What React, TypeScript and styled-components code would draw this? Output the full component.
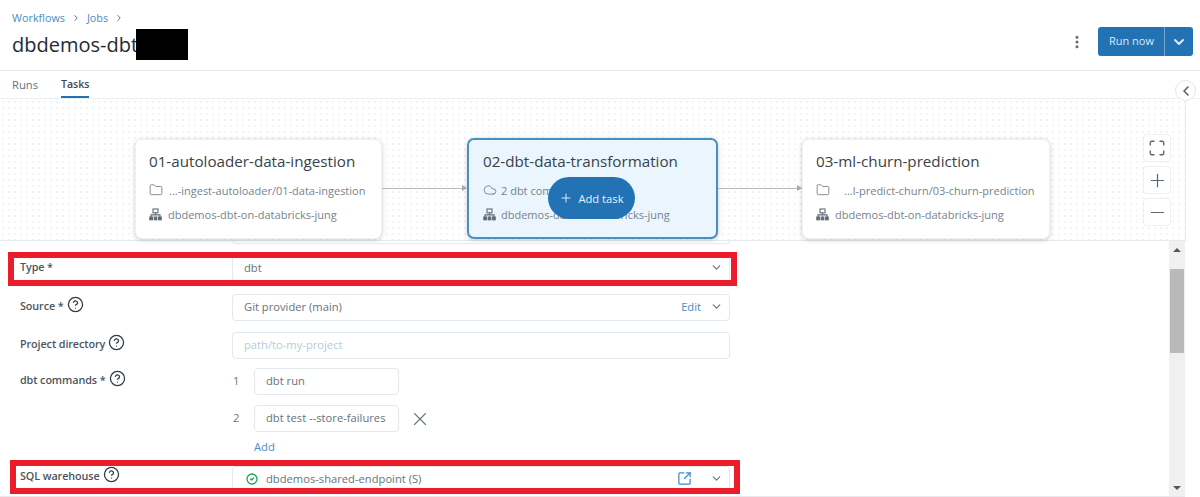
import React from 'react';
import styled, { createGlobalStyle } from 'styled-components';
import {
  ChevronDown,
  ChevronLeft,
  ChevronRight,
  CircleCheck,
  CircleHelp,
  Cloud,
  EllipsisVertical,
  Folder,
  Maximize,
  Minus,
  Plus,
  SquareArrowOutUpRight,
  X,
} from 'lucide-react';

const GlobalStyle = createGlobalStyle`
  html, body { margin: 0; padding: 0; background: #fff; }
  body { font-family: "Open Sans", "Noto Sans", "Liberation Sans", sans-serif; color: #3a4650; }
  * { box-sizing: border-box; }
`;

const Page = styled.div`
  position: relative;
  width: 1200px;
  height: 497px;
  overflow: hidden;
  display: flex;
  flex-direction: column;
  background: #fff;
`;

const Header = styled.header`
  height: 71px;
  flex: none;
  display: flex;
  justify-content: space-between;
  align-items: flex-start;
  padding: 10px 7px 0 12px;
  border-bottom: 1px solid #e6e8ea;
`;

const TitleBlock = styled.div`
  display: flex;
  flex-direction: column;
`;

const Breadcrumb = styled.nav`
  display: flex;
  align-items: center;
  gap: 6px;
  height: 15px;
  font-size: 10.8px;
  color: #4a8cc6;
  svg { color: #66727c; }
`;

const Title = styled.h1`
  display: flex;
  align-items: flex-start;
  margin: 4px 0 0;
  font-size: 20px;
  line-height: 31px;
  font-weight: 500;
  color: #232c34;
`;

const BlackBar = styled.span`
  display: block;
  width: 52px;
  height: 31px;
  margin-left: -9px;
  background: #000;
`;

const Actions = styled.div`
  display: flex;
  align-items: center;
  gap: 13px;
  margin-top: 17px;
  color: #5e6c78;
`;

const RunGroup = styled.div`
  display: flex;
  height: 29px;
  width: 95px;
  border-radius: 3px;
  overflow: hidden;
  background: #2272b4;
  color: #dbeaf6;
  font-size: 11px;
`;

const RunLabel = styled.span`
  flex: 1;
  display: flex;
  align-items: center;
  justify-content: center;
  padding: 0 0 2px 1px;
  border-right: 1px solid #79a9d1;
`;

const RunCaret = styled.span`
  width: 28px;
  display: flex;
  align-items: center;
  justify-content: center;
`;

const Tabs = styled.div`
  height: 28px;
  flex: none;
  display: flex;
  gap: 23px;
  padding-left: 12px;
  border-bottom: 1px solid #e8eef2;
`;

const Tab = styled.span<{ $active?: boolean }>`
  height: 27px;
  padding-top: 6px;
  font-size: ${({ $active }) => ($active ? '10.6px' : '11.2px')};
  font-weight: ${({ $active }) => ($active ? 600 : 500)};
  color: ${({ $active }) => ($active ? '#3d4a55' : '#66727c')};
  border-bottom: 2px solid ${({ $active }) => ($active ? '#2272b4' : 'transparent')};
`;

const Canvas = styled.section`
  position: relative;
  height: 142px;
  flex: none;
  width: 1186px;
  display: flex;
  align-items: flex-start;
  padding: 40px 0 0 135px;
  border-right: 1px solid #e8ebee;
  border-bottom: 1px solid #e4eaef;
  background-image: radial-gradient(circle at 3px 3px, #f1f3f5 0.9px, transparent 1.1px);
  background-size: 6px 6px;
`;

const Node = styled.article<{ $selected?: boolean; $width: number }>`
  width: ${({ $width }) => $width}px;
  height: ${({ $selected }) => ($selected ? 101 : 100)}px;
  margin-top: ${({ $selected }) => ($selected ? -1 : 0)}px;
  flex: none;
  padding: ${({ $selected }) => ($selected ? '11px 14px 0' : '11px 13px 0')};
  border-radius: 7px;
  border: ${({ $selected }) => ($selected ? '2px solid #4a8fc4' : '1px solid #f0f1f2')};
  background: ${({ $selected }) => ($selected ? '#ebf5fd' : '#fff')};
  box-shadow: 0 1px 4px rgba(40, 55, 70, 0.25);
`;

const NodeTitle = styled.div`
  margin-bottom: 11px;
  font-size: 15.2px;
  line-height: 20px;
  color: #39424a;
  white-space: nowrap;
`;

const NodeLine = styled.div`
  display: flex;
  align-items: center;
  height: 16px;
  margin-top: 8px;
  font-size: 11px;
  color: #77838d;
  white-space: nowrap;
  svg { flex: none; color: #5f6b75; }
`;

const NodePath = styled.span<{ $indent: number }>`
  margin-left: ${({ $indent }) => $indent}px;
`;

const Connector = styled.div<{ $width: number }>`
  position: relative;
  width: ${({ $width }) => $width}px;
  height: 1px;
  flex: none;
  margin-top: 49px;
  background: #b4babf;
  &::after {
    content: '';
    position: absolute;
    right: 0;
    top: -3px;
    border-left: 5px solid #a3aaaf;
    border-top: 3.5px solid transparent;
    border-bottom: 3.5px solid transparent;
  }
`;

const AddTask = styled.button`
  position: absolute;
  left: 548px;
  top: 78px;
  width: 87px;
  height: 42px;
  display: flex;
  align-items: center;
  justify-content: center;
  gap: 5px;
  padding: 0;
  border: 0;
  border-radius: 21px;
  background: #2272b4;
  color: #e8f2fa;
  font-family: inherit;
  font-size: 11.2px;
`;

const Controls = styled.div`
  position: absolute;
  left: 1143px;
  top: 35px;
  display: flex;
  flex-direction: column;
  gap: 4px;
`;

const ControlButton = styled.div`
  width: 28px;
  height: 28px;
  display: flex;
  align-items: center;
  justify-content: center;
  border: 1px solid #eef0f2;
  border-radius: 4px;
  background: #fff;
  color: #5a6772;
`;

const Collapse = styled.div`
  position: absolute;
  left: 1175px;
  top: 80px;
  width: 21px;
  height: 21px;
  display: flex;
  align-items: center;
  justify-content: center;
  border: 1px solid #e4e7ea;
  border-radius: 50%;
  background: #fff;
  color: #55626d;
`;

const Lower = styled.section`
  position: relative;
  flex: 1;
  min-height: 0;
  display: flex;
  width: 1185px;
  border-bottom: 1px solid #e6eaee;
`;

const Form = styled.div`
  flex: 1;
  height: 100%;
  overflow: hidden;
  padding-left: 20px;
`;

const CutField = styled.div`
  margin-left: 212px;
  width: 498px;
  height: 3px;
  border: 1px solid #e3e9ee;
  border-top: 0;
  border-radius: 0 0 4px 4px;
`;

const Row = styled.div<{ $height: number; $mt?: number }>`
  display: grid;
  grid-template-columns: 212px 498px;
  height: ${({ $height }) => $height}px;
  margin-top: ${({ $mt }) => $mt ?? 0}px;
`;

const Label = styled.label`
  display: flex;
  align-items: flex-start;
  gap: 3px;
  padding-top: 4px;
  font-size: 10.8px;
  line-height: 16px;
  font-weight: 600;
  letter-spacing: -0.1px;
  color: #4b5660;
  svg { color: #2f3a44; margin-top: -2px; }
`;

const WarehouseLabel = styled(Label)`
  padding-top: 2px;
`;

const Field = styled.div<{ $placeholder?: boolean }>`
  display: flex;
  align-items: center;
  height: 27px;
  padding: 0 6px 2px 11px;
  border: 1px solid #e1e8ee;
  border-radius: 4px;
  font-size: 11.2px;
  color: ${({ $placeholder }) => ($placeholder ? '#b7cbdc' : '#67727c')};
`;

const FieldText = styled.span`
  flex: 1;
`;

const EditLink = styled.span`
  margin-right: 9px;
  color: #4a8cc6;
  font-size: 11.2px;
`;

const Caret = styled(ChevronDown)`
  color: #6e7b86;
`;

const CommandList = styled.div`
  display: flex;
  flex-direction: column;
`;

const CommandRow = styled.div`
  display: flex;
  align-items: center;
  height: 27px;
  margin-bottom: 10px;
  font-size: 11.2px;
  color: #6d7882;
`;

const CommandIndex = styled.span`
  width: 22px;
  padding: 0 0 2px 1px;
`;

const CommandInput = styled.div`
  width: 145px;
  height: 27px;
  display: flex;
  align-items: center;
  padding: 0 0 2px 11px;
  border: 1px solid #e1e8ee;
  border-radius: 4px;
  color: #67727c;
  white-space: nowrap;
`;

const RemoveIcon = styled(X)`
  margin-left: 10px;
  color: #66747f;
`;

const AddLink = styled.span`
  margin: -3px 0 0 22px;
  font-size: 11.2px;
  color: #4a8cc6;
`;

const StatusIcon = styled(CircleCheck)`
  color: #1fa35c;
  margin: 0 8px 0 2px;
  flex: none;
`;

const OpenIcon = styled(SquareArrowOutUpRight)`
  color: #3d8ac8;
  margin-right: 18px;
`;

const Highlight = styled.div<{ $left: number; $top: number; $width: number; $height: number }>`
  position: absolute;
  left: ${({ $left }) => $left}px;
  top: ${({ $top }) => $top}px;
  width: ${({ $width }) => $width}px;
  height: ${({ $height }) => $height}px;
  border: 6.5px solid #ed1c2b;
  pointer-events: none;
`;

const Scrollbar = styled.div`
  width: 16px;
  flex: none;
  display: flex;
  flex-direction: column;
  align-items: center;
  background: #f0f0f0;
`;

const ScrollArrow = styled.span<{ $down?: boolean }>`
  flex: none;
  margin-top: ${({ $down }) => ($down ? 'auto' : '7px')};
  margin-bottom: ${({ $down }) => ($down ? '6px' : '0')};
  border-left: 4px solid transparent;
  border-right: 4px solid transparent;
  border-bottom: ${({ $down }) => ($down ? '0' : '4px solid #555')};
  border-top: ${({ $down }) => ($down ? '4px solid #555' : '0')};
`;

const ScrollThumb = styled.div`
  width: 14px;
  height: 84px;
  margin-top: 17px;
  background: #b9b9b9;
`;

const ClusterIcon = () => (
  <svg width="13" height="13" viewBox="0 0 13 13" fill="none" stroke="currentColor" strokeWidth="1.1">
    <rect x="4" y="1" width="5" height="3.8" />
    <path d="M6.5 4.8V6.9M2 9V6.9H11V9" />
    <rect x="0.8" y="9" width="2.6" height="2.8" fill="currentColor" />
    <rect x="5.2" y="9" width="2.6" height="2.8" fill="currentColor" />
    <rect x="9.6" y="9" width="2.6" height="2.8" fill="currentColor" />
  </svg>
);

const Help = () => <CircleHelp size={17} strokeWidth={1.8} />;

export default function App() {
  return (
    <Page>
      <GlobalStyle />
      <Header>
        <TitleBlock>
          <Breadcrumb>
            <span>Workflows</span>
            <ChevronRight size={10} strokeWidth={2.4} />
            <span>Jobs</span>
            <ChevronRight size={10} strokeWidth={2.4} />
          </Breadcrumb>
          <Title>
            dbdemos-dbt-
            <BlackBar />
          </Title>
        </TitleBlock>
        <Actions>
          <EllipsisVertical size={16} strokeWidth={2.6} />
          <RunGroup>
            <RunLabel>Run now</RunLabel>
            <RunCaret>
              <ChevronDown size={16} strokeWidth={3} />
            </RunCaret>
          </RunGroup>
        </Actions>
      </Header>

      <Tabs>
        <Tab>Runs</Tab>
        <Tab $active>Tasks</Tab>
      </Tabs>

      <Canvas>
        <Node $width={247}>
          <NodeTitle>01-autoloader-data-ingestion</NodeTitle>
          <NodeLine>
            <Folder size={14} strokeWidth={1.3} />
            <NodePath $indent={6}>...-ingest-autoloader/01-data-ingestion</NodePath>
          </NodeLine>
          <NodeLine>
            <ClusterIcon />
            <NodePath $indent={6}>dbdemos-dbt-on-databricks-jung</NodePath>
          </NodeLine>
        </Node>
        <Connector $width={85} />
        <Node $width={251} $selected>
          <NodeTitle>02-dbt-data-transformation</NodeTitle>
          <NodeLine>
            <Cloud size={14} strokeWidth={1.3} />
            <NodePath $indent={4}>2 dbt commands</NodePath>
          </NodeLine>
          <NodeLine>
            <ClusterIcon />
            <NodePath $indent={5}>dbdemos-dbt-on-databricks-jung</NodePath>
          </NodeLine>
        </Node>
        <Connector $width={84} />
        <Node $width={248}>
          <NodeTitle>03-ml-churn-prediction</NodeTitle>
          <NodeLine>
            <Folder size={14} strokeWidth={1.3} />
            <NodePath $indent={14}>...l-predict-churn/03-churn-prediction</NodePath>
          </NodeLine>
          <NodeLine>
            <ClusterIcon />
            <NodePath $indent={6}>dbdemos-dbt-on-databricks-jung</NodePath>
          </NodeLine>
        </Node>
        <AddTask>
          <Plus size={14} strokeWidth={1.6} />
          Add task
        </AddTask>
        <Controls>
          <ControlButton>
            <Maximize size={18} strokeWidth={1.8} />
          </ControlButton>
          <ControlButton>
            <Plus size={21} strokeWidth={1.4} />
          </ControlButton>
          <ControlButton>
            <Minus size={21} strokeWidth={1.4} />
          </ControlButton>
        </Controls>
      </Canvas>
      <Collapse>
        <ChevronLeft size={16} strokeWidth={2.4} />
      </Collapse>

      <Lower>
        <Form>
          <CutField />
          <Row $height={27} $mt={11}>
            <Label>Type *</Label>
            <Field>
              <FieldText>dbt</FieldText>
              <Caret size={13} strokeWidth={2.4} />
            </Field>
          </Row>
          <Row $height={27} $mt={12}>
            <Label>
              Source * <Help />
            </Label>
            <Field>
              <FieldText>Git provider (main)</FieldText>
              <EditLink>Edit</EditLink>
              <Caret size={13} strokeWidth={2.4} />
            </Field>
          </Row>
          <Row $height={27} $mt={11}>
            <Label>
              Project directory <Help />
            </Label>
            <Field $placeholder>path/to-my-project</Field>
          </Row>
          <Row $height={95} $mt={9}>
            <Label>
              dbt commands * <Help />
            </Label>
            <CommandList>
              <CommandRow>
                <CommandIndex>1</CommandIndex>
                <CommandInput>dbt run</CommandInput>
              </CommandRow>
              <CommandRow>
                <CommandIndex>2</CommandIndex>
                <CommandInput>dbt test --store-failures</CommandInput>
                <RemoveIcon size={22} strokeWidth={1.2} />
              </CommandRow>
              <AddLink>Add</AddLink>
            </CommandList>
          </Row>
          <Row $height={27} $mt={3}>
            <WarehouseLabel>
              SQL warehouse <Help />
            </WarehouseLabel>
            <Field>
              <StatusIcon size={12} strokeWidth={2.6} />
              <FieldText>dbdemos-shared-endpoint (S)</FieldText>
              <OpenIcon size={15} strokeWidth={2} />
              <Caret size={13} strokeWidth={2.4} />
            </Field>
          </Row>
        </Form>
        <Scrollbar>
          <ScrollArrow />
          <ScrollThumb />
          <ScrollArrow $down />
        </Scrollbar>
        <Highlight $left={8} $top={11} $width={729} $height={34} />
        <Highlight $left={10} $top={219} $width={730} $height={34} />
      </Lower>
    </Page>
  );
}
